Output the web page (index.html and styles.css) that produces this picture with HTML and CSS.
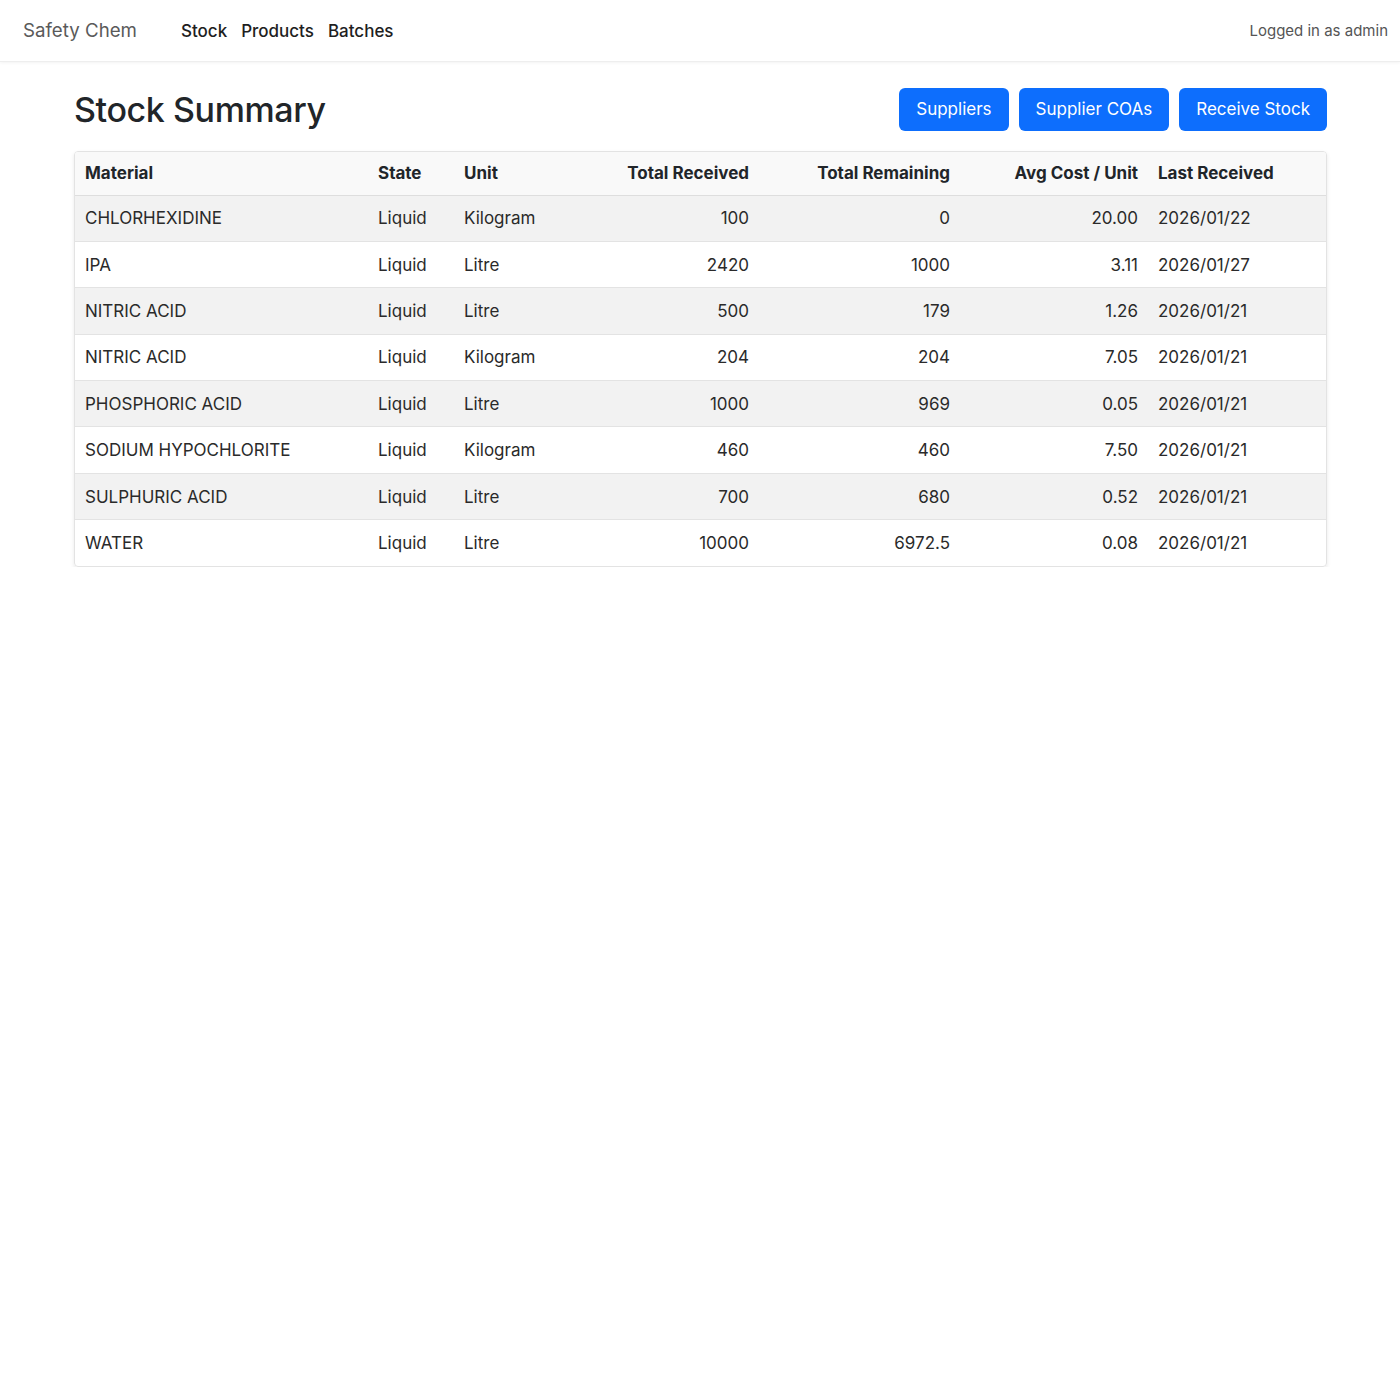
FILE: index.html
```html
<!DOCTYPE html>
<html>
<head>
<meta charset="utf-8">
<title>Stock Summary</title>
<link rel="stylesheet" href="styles.css">
</head>
<body>
<nav class="navbar">
  <div class="nav-left">
    <span class="brand">Safety Chem</span>
    <ul class="nav-links">
      <li><a href="#">Stock</a></li>
      <li><a href="#">Products</a></li>
      <li><a href="#">Batches</a></li>
    </ul>
  </div>
  <span class="user">Logged in as admin</span>
</nav>
<main class="container">
  <div class="page-head">
    <h1>Stock Summary</h1>
    <div class="actions">
      <a class="btn" href="#">Suppliers</a>
      <a class="btn" href="#">Supplier COAs</a>
      <a class="btn" href="#">Receive Stock</a>
    </div>
  </div>
  <div class="table-wrap">
    <table class="stock">
      <colgroup>
        <col class="c-material"><col class="c-state"><col class="c-unit"><col class="c-recv"><col class="c-rem"><col class="c-cost"><col class="c-last">
      </colgroup>
      <thead>
        <tr><th>Material</th><th>State</th><th>Unit</th><th class="num">Total Received</th><th class="num">Total Remaining</th><th class="num">Avg Cost / Unit</th><th>Last Received</th></tr>
      </thead>
      <tbody>
        <tr><td>CHLORHEXIDINE</td><td>Liquid</td><td>Kilogram</td><td class="num">100</td><td class="num">0</td><td class="num">20.00</td><td>2026/01/22</td></tr>
        <tr><td>IPA</td><td>Liquid</td><td>Litre</td><td class="num">2420</td><td class="num">1000</td><td class="num">3.11</td><td>2026/01/27</td></tr>
        <tr><td>NITRIC ACID</td><td>Liquid</td><td>Litre</td><td class="num">500</td><td class="num">179</td><td class="num">1.26</td><td>2026/01/21</td></tr>
        <tr><td>NITRIC ACID</td><td>Liquid</td><td>Kilogram</td><td class="num">204</td><td class="num">204</td><td class="num">7.05</td><td>2026/01/21</td></tr>
        <tr><td>PHOSPHORIC ACID</td><td>Liquid</td><td>Litre</td><td class="num">1000</td><td class="num">969</td><td class="num">0.05</td><td>2026/01/21</td></tr>
        <tr><td>SODIUM HYPOCHLORITE</td><td>Liquid</td><td>Kilogram</td><td class="num">460</td><td class="num">460</td><td class="num">7.50</td><td>2026/01/21</td></tr>
        <tr><td>SULPHURIC ACID</td><td>Liquid</td><td>Litre</td><td class="num">700</td><td class="num">680</td><td class="num">0.52</td><td>2026/01/21</td></tr>
        <tr><td>WATER</td><td>Liquid</td><td>Litre</td><td class="num">10000</td><td class="num">6972.5</td><td class="num">0.08</td><td>2026/01/21</td></tr>
      </tbody>
    </table>
  </div>
</main>
</body>
</html>
```
FILE: styles.css
```css
* { box-sizing: border-box; }
html, body { margin: 0; padding: 0; background: #fff; }
body {
  font-family: Inter, "Liberation Sans", Arial, sans-serif;
  color: #212529;
  font-size: 17px;
}
a { text-decoration: none; color: inherit; }

.navbar {
  height: 62px;
  display: flex;
  align-items: center;
  justify-content: space-between;
  padding: 0 12px 0 23px;
  border-bottom: 1px solid #eeeeee;
  box-shadow: 0 1px 3px rgba(0,0,0,0.05);
}
.nav-left { display: flex; align-items: center; }
.brand { font-size: 18.7px; color: #5a5a5a; margin-right: 44px; }
.nav-links { list-style: none; margin: 0; padding: 0; display: flex; gap: 14px; }
.nav-links a { font-size: 17px; color: #1e1e1e; font-weight: 500; }
.user { font-size: 15px; color: #555; }

.container { padding: 0 73px 0 74px; }
.page-head {
  display: flex;
  align-items: center;
  justify-content: space-between;
  padding-top: 26px;
  margin-bottom: 20px;
}
h1 { margin: 0; font-size: 34px; font-weight: 500; letter-spacing: -0.4px; color: #212529; }
.actions { display: flex; gap: 10px; }
.btn {
  display: inline-block;
  background: #0d6efd;
  color: #fff;
  font-size: 17px;
  height: 43px;
  line-height: 43px;
  padding: 0 17px;
  border-radius: 6px;
}

.table-wrap {
  border: 1px solid #e3e3e3;
  border-radius: 4px;
  box-shadow: 0 2px 4px rgba(0,0,0,0.09);
  overflow: hidden;
}
.stock { width: 100%; border-collapse: collapse; table-layout: fixed; }
.c-material { width: 293px; }
.c-state { width: 86px; }
.c-unit { width: 126px; }
.c-recv { width: 179px; }
.c-rem { width: 201px; }
.c-cost { width: 188px; }
.c-last { width: 178px; }
.stock th, .stock td {
  text-align: left;
  padding: 0 10px;
  white-space: nowrap;
}
.stock th {
  height: 43px;
  font-weight: 700;
  background: #f9f9f9;
  border-bottom: 1px solid #dedede;
}
.stock td {
  height: 46.4px;
  color: #2a2a2a;
  border-bottom: 1px solid #e3e3e3;
}
.stock tbody tr:last-child td { border-bottom: none; }
.stock tbody tr:nth-child(odd) td { background: #f2f2f2; }
.stock .num { text-align: right; }
```
